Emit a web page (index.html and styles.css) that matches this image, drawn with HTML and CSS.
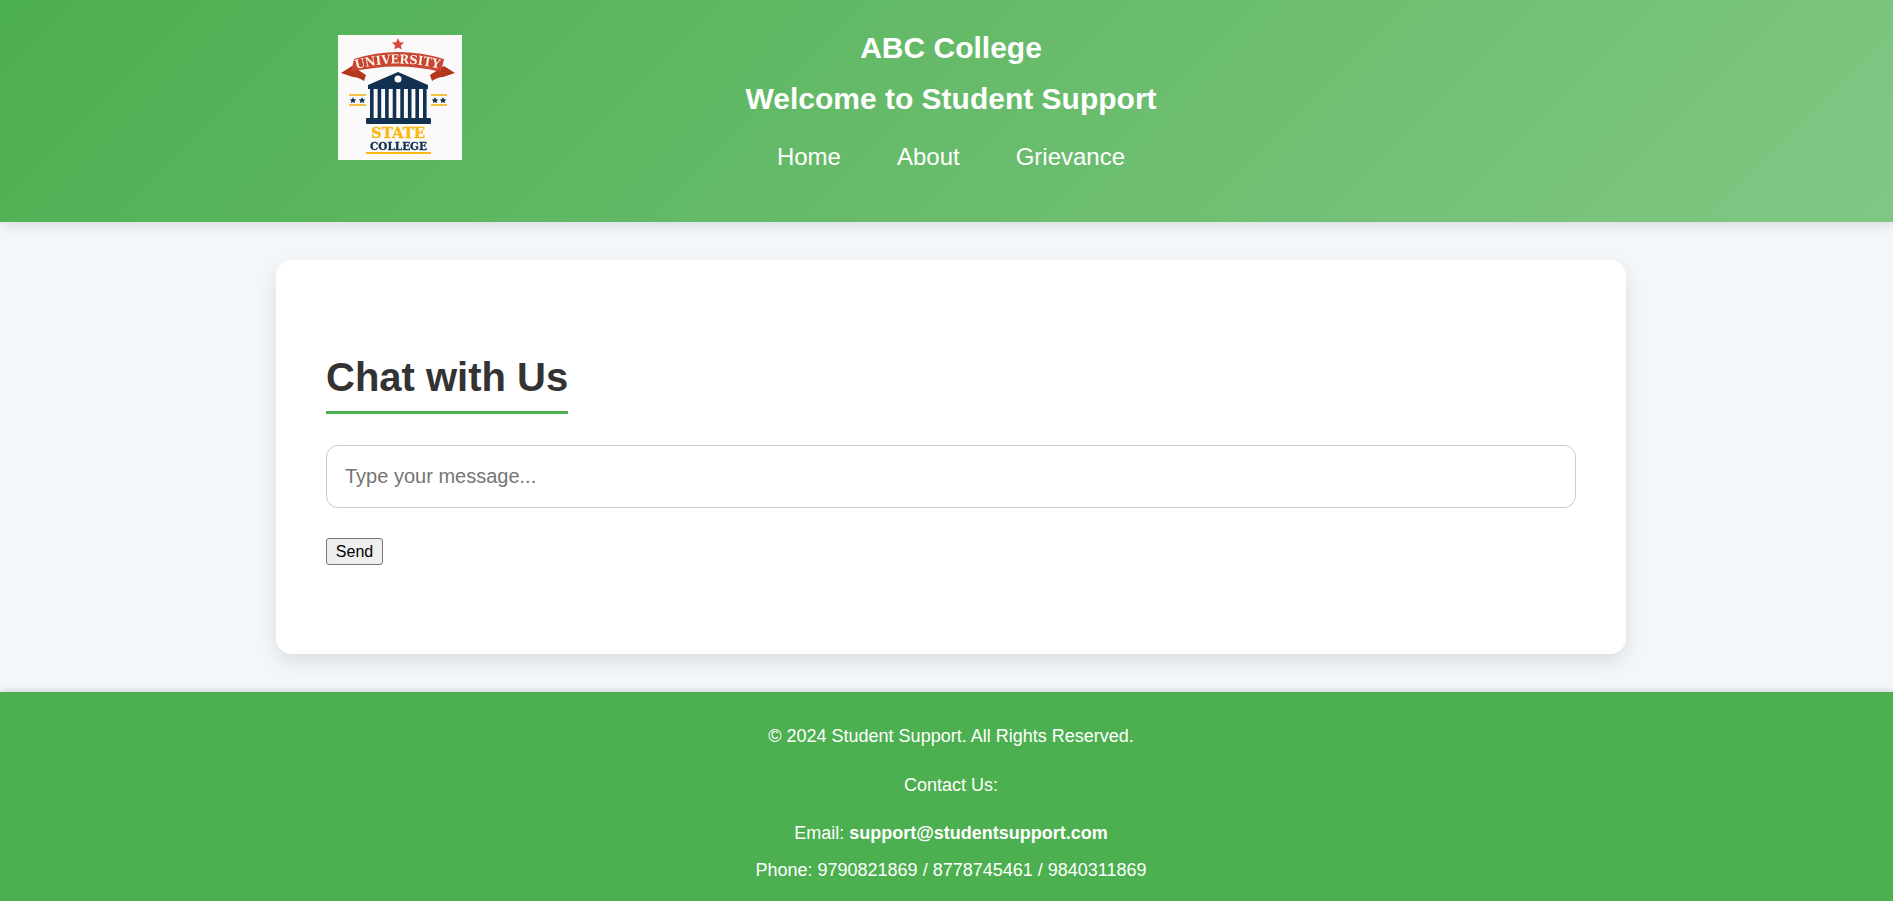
FILE: index.html
```html
<!DOCTYPE html>
<html lang="en">
<head>
    <meta charset="UTF-8" />
    <meta name="viewport" content="width=device-width, initial-scale=1.0" />
    <title>Student Support</title>
    <link rel="stylesheet" href="styles.css">
</head>
<body>
    <header class="site-header">
        <svg class="logo" viewBox="0 0 124 125" aria-label="University State College logo">
            <rect width="124" height="125" fill="#fafafa" />
            <polygon points="60,3 61.8,7.2 66,7.6 62.8,10.4 63.8,14.6 60,12.4 56.2,14.6 57.2,10.4 54,7.6 58.2,7.2" fill="#d9483b" />
            <path d="M3 38 L14 31 L28 40 L26 46 Q20 42 15 42 Z" fill="#b5351f" />
            <path d="M117 38 L106 31 L92 40 L94 46 Q100 42 105 42 Z" fill="#b5351f" />
            <path d="M16 24 Q60 10 106 24 L103 37 Q60 26 13 37 Z" fill="#c9452f" />
            <path id="bannerCurve" d="M18 34 Q60 23 102 34" fill="none" />
            <text class="logo-banner"><textPath href="#bannerCurve" textLength="84" lengthAdjust="spacingAndGlyphs">UNIVERSITY</textPath></text>
            <polygon points="60,37 90,50 90,54 30,54 30,50" fill="#12304f" />
            <circle cx="60" cy="44" r="3.5" fill="#fafafa" />
            <g fill="#12304f">
                <rect x="32" y="54" width="3.6" height="29" />
                <rect x="39.6" y="54" width="3.6" height="29" />
                <rect x="47.1" y="54" width="3.6" height="29" />
                <rect x="54.7" y="54" width="3.6" height="29" />
                <rect x="62.3" y="54" width="3.6" height="29" />
                <rect x="69.9" y="54" width="3.6" height="29" />
                <rect x="77.4" y="54" width="3.6" height="29" />
                <rect x="85" y="54" width="3.6" height="29" />
                <rect x="28" y="83" width="65" height="6" rx="1" />
            </g>
            <g fill="#f5c242">
                <rect x="11" y="59" width="17" height="2" />
                <rect x="11" y="69" width="17" height="2" />
                <rect x="93" y="59" width="16" height="2" />
                <rect x="93" y="69" width="16" height="2" />
                <rect x="28" y="117" width="65" height="2" fill="#fbb917" />
            </g>
            <g fill="#12304f">
                <polygon points="15,62 16,64.3 18.4,64.5 16.6,66 17.1,68.3 15,67 12.9,68.3 13.4,66 11.6,64.5 14,64.3" />
                <polygon points="24,62 25,64.3 27.4,64.5 25.6,66 26.1,68.3 24,67 21.9,68.3 22.4,66 20.6,64.5 23,64.3" />
                <polygon points="97,62 98,64.3 100.4,64.5 98.6,66 99.1,68.3 97,67 94.9,68.3 95.4,66 93.6,64.5 96,64.3" />
                <polygon points="105,62 106,64.3 108.4,64.5 106.6,66 107.1,68.3 105,67 102.9,68.3 103.4,66 101.6,64.5 104,64.3" />
            </g>
            <text class="logo-state" x="60" y="102.7" text-anchor="middle" textLength="54" lengthAdjust="spacingAndGlyphs">STATE</text>
            <text class="logo-college" x="60.5" y="114.5" text-anchor="middle" textLength="57" lengthAdjust="spacingAndGlyphs">COLLEGE</text>
        </svg>
        <div class="header-text">
            <h1>ABC College</h1>
            <h2>Welcome to Student Support</h2>
            <nav class="main-nav">
                <a href="#">Home</a>
                <a href="#">About</a>
                <a href="#">Grievance</a>
            </nav>
        </div>
    </header>

    <main class="content">
        <section class="chat-card">
            <h2 class="chat-title">Chat with Us</h2>
            <form class="chat-form">
                <input class="chat-input" type="text" placeholder="Type your message..." />
                <button class="send-button" type="button">Send</button>
            </form>
        </section>
    </main>

    <footer class="site-footer">
        <p>&copy; 2024 Student Support. All Rights Reserved.</p>
        <p class="footer-gap">Contact Us:</p>
        <p class="footer-gap footer-email">Email: <strong>support@studentsupport.com</strong></p>
        <p class="footer-line">Phone: 9790821869 / 8778745461 / 9840311869</p>
    </footer>
</body>
</html>
```

FILE: styles.css
```css
body {
  display: flex;
  flex-direction: column;
  min-height: 100vh;
  font-family: "Liberation Sans", Arial, sans-serif;
  margin: 0;
  background-color: #f4f7fa;
  color: #333;
}

.site-header {
  display: flex;
  align-items: flex-start;
  height: 222px;
  box-sizing: border-box;
  padding: 31px 453px 0 338px;
  background: linear-gradient(135deg, #4caf50, #81c784);
  box-shadow: 0 4px 12px rgba(0, 0, 0, 0.1);
}

.logo {
  width: 124px;
  height: 125px;
  margin-top: 4px;
  flex-shrink: 0;
  filter: blur(0.5px);
}

.logo-banner,
.logo-state,
.logo-college {
  font-family: "DejaVu Serif", serif;
  font-weight: bold;
}

.logo-banner {
  font-size: 12.5px;
  fill: #fbeee6;
}

.logo-state {
  font-size: 14.7px;
  fill: #fbb917;
  stroke: #fbb917;
  stroke-width: 0.4px;
}

.logo-college {
  font-size: 11.5px;
  fill: #12304f;
  stroke: #12304f;
  stroke-width: 0.3px;
}

.header-text {
  flex: 1;
  text-align: center;
  color: #fff;
}

.header-text h1,
.header-text h2 {
  margin: 0;
  font-size: 30px;
  line-height: 34px;
}

.header-text h2 {
  margin-top: 17px;
}

.main-nav {
  display: flex;
  justify-content: center;
  gap: 56px;
  margin-top: 27px;
  font-size: 24px;
  line-height: 28px;
}

.main-nav a {
  color: #fff;
  text-decoration: none;
}

.content {
  display: flex;
  justify-content: center;
  padding: 38px 267px 38px 276px;
}

.chat-card {
  width: 1350px;
  height: 394px;
  box-sizing: border-box;
  padding: 94px 50px 0;
  background-color: #fff;
  border-radius: 16px;
  box-shadow: 0 8px 20px rgba(0, 0, 0, 0.1);
}

.chat-title {
  display: inline-block;
  margin: 0 0 31px;
  padding-bottom: 11px;
  border-bottom: 3px solid #4caf50;
  font-size: 40px;
  line-height: 46px;
  color: #333;
}

.chat-input {
  display: block;
  width: 100%;
  height: 63px;
  box-sizing: border-box;
  margin-bottom: 30px;
  padding: 0 18px;
  border: 1px solid #ccc;
  border-radius: 12px;
  font-family: inherit;
  font-size: 20px;
}

.chat-input::placeholder {
  color: #757575;
}

.send-button {
  display: block;
  width: 57px;
  height: 27px;
  padding: 0;
  border: 1px solid #767676;
  border-radius: 3px;
  background-color: #efefef;
  font-family: inherit;
  font-size: 16px;
  color: #000;
}

.site-footer {
  flex: 1;
  box-sizing: border-box;
  padding: 34px 0 0 9px;
  background-color: #4caf50;
  box-shadow: 0 -2px 6px rgba(0, 0, 0, 0.12);
  color: #fff;
  text-align: center;
  font-size: 18px;
}

.site-footer p {
  margin: 0;
  line-height: 21px;
}

.site-footer .footer-gap {
  margin-top: 28px;
}

.site-footer .footer-email {
  margin-top: 27px;
}

.site-footer .footer-line {
  margin-top: 16px;
}
```
